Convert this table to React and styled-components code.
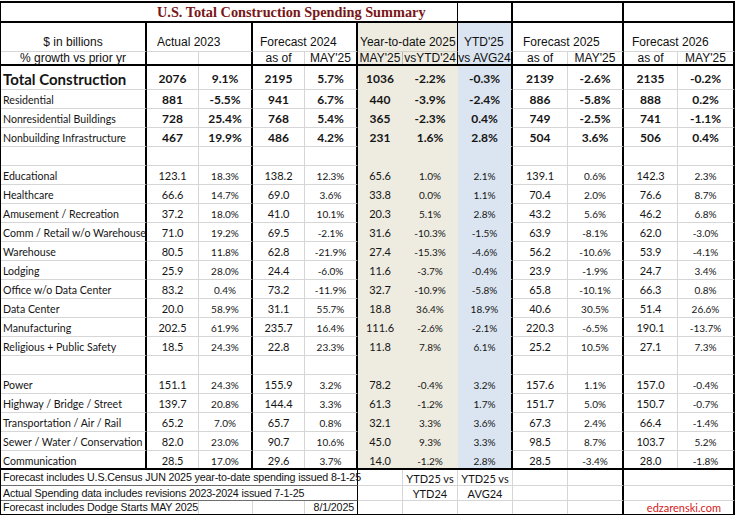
import React from 'react';
import styled, { createGlobalStyle, css } from 'styled-components';

const GlobalStyle = createGlobalStyle`
  html, body { margin: 0; padding: 0; background: #ffffff; }
  body { width: 736px; height: 516px; overflow: hidden; }
`;

const GRID = '#d6d6d6';
const INK = '#151515';
const FILLS = { tan: '#eeece1', blue: '#dbe5f1' };
const COLS = '146px 52px 54px 52px 53px 45px 55px 55px 55px 56px 54px 57px';
const BODY_FONT = 'Lato, "Open Sans", sans-serif';
const HEAD_FONT = '"Liberation Sans", Arial, sans-serif';

const Sheet = styled.div`
  margin-top: 1px;
  width: 735px;
  border-top: 2px solid #000;
  border-left: 1px solid #000;
  box-sizing: border-box;
  color: ${INK};
`;

const Row = styled.div`
  display: grid;
  grid-template-columns: ${COLS};
  height: ${(p) => p.$h}px;
  box-sizing: border-box;
  ${(p) =>
    p.$thick &&
    css`
      border-bottom: 2px solid #000;
      & > div { border-bottom: none; }
    `}
`;

const edgeRule = (p) => {
  if (p.$edge === 'thick') return '2px solid #000';
  if (p.$edge === 'dark') return '1px solid #000';
  if (p.$edge === 'gray') return '1px solid #b9b7ae';
  if (p.$edge === 'none') return '1px solid transparent';
  return `1px solid ${p.$fill ? FILLS[p.$fill] : GRID}`;
};

const Cell = styled.div`
  box-sizing: border-box;
  grid-column: span ${(p) => p.$span || 1};
  display: flex;
  align-items: ${(p) => (p.$bottom ? 'flex-end' : 'center')};
  justify-content: ${(p) =>
    p.$align === 'left' ? 'flex-start' : p.$align === 'right' ? 'flex-end' : 'center'};
  padding: ${(p) => `${p.$pt || 0}px ${p.$pr || 0}px ${p.$pb || 0}px ${p.$pl || 0}px`};
  background: ${(p) => (p.$fill ? FILLS[p.$fill] : '#ffffff')};
  border-right: ${edgeRule};
  border-bottom: 1px solid ${(p) => (p.$rule ? p.$rule : p.$fill ? FILLS[p.$fill] : GRID)};
  white-space: nowrap;
  overflow: visible;
  min-width: 0;
`;

const Text = styled.span`
  position: relative;
`;

const Title = styled(Text)`
  font-family: "Liberation Serif", "Times New Roman", serif;
  font-weight: 700;
  font-size: 14.3px;
  color: #7a1518;
  line-height: 18px;
`;

const Head = styled(Text)`
  font-family: ${HEAD_FONT};
  font-size: 12px;
  line-height: ${(p) => p.$lh || 14}px;
  color: #111;
`;

const Label = styled(Text)`
  font-family: ${BODY_FONT};
  font-size: ${(p) => (p.$big ? 15 : 10.6)}px;
  font-weight: ${(p) => (p.$big ? 700 : 400)};
  line-height: 14px;
  color: ${INK};
`;

const Num = styled(Text)`
  font-family: ${BODY_FONT};
  font-size: ${(p) => (p.$bold ? 12 : p.$pct ? 10 : 11)}px;
  font-weight: ${(p) => (p.$bold ? 700 : 400)};
  line-height: 14px;
  color: ${INK};
`;

const Note = styled(Text)`
  font-family: "Liberation Sans", Arial, sans-serif;
  font-size: 10.7px;
  letter-spacing: -0.15px;
  line-height: 13px;
  color: #111;
`;

const Small = styled(Text)`
  font-family: ${BODY_FONT};
  font-size: 11px;
  line-height: 13px;
  color: ${INK};
`;

const Credit = styled(Text)`
  font-family: ${BODY_FONT};
  font-size: 11px;
  line-height: 13px;
  color: #d42020;
`;

const EDGES = ['thick', 'grid', 'thick', 'grid', 'thick', 'grid', 'none', 'thick', 'grid', 'thick', 'grid', 'thick'];
const DATA_FILLS = [null, null, null, null, null, 'tan', 'tan', 'blue', null, null, null, null];

const total = ['Total Construction', '2076', '9.1%', '2195', '5.7%', '1036', '-2.2%', '-0.3%', '2139', '-2.6%', '2135', '-0.2%'];

const groups = [
  ['Residential', '881', '-5.5%', '941', '6.7%', '440', '-3.9%', '-2.4%', '886', '-5.8%', '888', '0.2%'],
  ['Nonresidential Buildings', '728', '25.4%', '768', '5.4%', '365', '-2.3%', '0.4%', '749', '-2.5%', '741', '-1.1%'],
  ['Nonbuilding Infrastructure', '467', '19.9%', '486', '4.2%', '231', '1.6%', '2.8%', '504', '3.6%', '506', '0.4%'],
];

const buildings = [
  ['Educational', '123.1', '18.3%', '138.2', '12.3%', '65.6', '1.0%', '2.1%', '139.1', '0.6%', '142.3', '2.3%'],
  ['Healthcare', '66.6', '14.7%', '69.0', '3.6%', '33.8', '0.0%', '1.1%', '70.4', '2.0%', '76.6', '8.7%'],
  ['Amusement / Recreation', '37.2', '18.0%', '41.0', '10.1%', '20.3', '5.1%', '2.8%', '43.2', '5.6%', '46.2', '6.8%'],
  ['Comm / Retail w/o Warehouse', '71.0', '19.2%', '69.5', '-2.1%', '31.6', '-10.3%', '-1.5%', '63.9', '-8.1%', '62.0', '-3.0%'],
  ['Warehouse', '80.5', '11.8%', '62.8', '-21.9%', '27.4', '-15.3%', '-4.6%', '56.2', '-10.6%', '53.9', '-4.1%'],
  ['Lodging', '25.9', '28.0%', '24.4', '-6.0%', '11.6', '-3.7%', '-0.4%', '23.9', '-1.9%', '24.7', '3.4%'],
  ['Office w/o Data Center', '83.2', '0.4%', '73.2', '-11.9%', '32.7', '-10.9%', '-5.8%', '65.8', '-10.1%', '66.3', '0.8%'],
  ['Data Center', '20.0', '58.9%', '31.1', '55.7%', '18.8', '36.4%', '18.9%', '40.6', '30.5%', '51.4', '26.6%'],
  ['Manufacturing', '202.5', '61.9%', '235.7', '16.4%', '111.6', '-2.6%', '-2.1%', '220.3', '-6.5%', '190.1', '-13.7%'],
  ['Religious + Public Safety', '18.5', '24.3%', '22.8', '23.3%', '11.8', '7.8%', '6.1%', '25.2', '10.5%', '27.1', '7.3%'],
];

const infrastructure = [
  ['Power', '151.1', '24.3%', '155.9', '3.2%', '78.2', '-0.4%', '3.2%', '157.6', '1.1%', '157.0', '-0.4%'],
  ['Highway / Bridge / Street', '139.7', '20.8%', '144.4', '3.3%', '61.3', '-1.2%', '1.7%', '151.7', '5.0%', '150.7', '-0.7%'],
  ['Transportation / Air / Rail', '65.2', '7.0%', '65.7', '0.8%', '32.1', '3.3%', '3.6%', '67.3', '2.4%', '66.4', '-1.4%'],
  ['Sewer / Water / Conservation', '82.0', '23.0%', '90.7', '10.6%', '45.0', '9.3%', '3.3%', '98.5', '8.7%', '103.7', '5.2%'],
  ['Communication', '28.5', '17.0%', '29.6', '3.7%', '14.0', '-1.2%', '2.8%', '28.5', '-3.4%', '28.0', '-1.8%'],
];

const isPct = (v) => v.endsWith('%');

function DataRow({ row, kind, thick }) {
  const [label, ...vals] = row;
  const big = kind === 'total';
  const bold = kind === 'total' || kind === 'group';
  return (
    <Row $h={big ? 24 : 19} $thick={thick}>
      <Cell $align="left" $pl={2} $pt={big ? 3 : 2} $edge="thick">
        <Label $big={big}>{label}</Label>
      </Cell>
      {vals.map((v, i) => (
        <Cell key={i} $pt={big ? 3 : 2} $edge={EDGES[i + 1]} $fill={DATA_FILLS[i + 1]}>
          <Num $bold={bold} $pct={!bold && isPct(v)}>{v}</Num>
        </Cell>
      ))}
    </Row>
  );
}

function BlankRow() {
  return (
    <Row $h={19}>
      {EDGES.map((e, i) => (
        <Cell key={i} $edge={e} $fill={DATA_FILLS[i]} />
      ))}
    </Row>
  );
}

const NOTE_RULE = '#6e6e6e';

export default function App() {
  return (
    <>
      <GlobalStyle />
      <Sheet>
        <Row $h={20} $thick>
          <Cell $span={7} $align="left" $pl={156} $edge="dark">
            <Title>U.S. Total Construction Spending Summary</Title>
          </Cell>
          <Cell $edge="thick" />
          <Cell $span={2} $edge="thick" />
          <Cell $span={2} $edge="thick" />
        </Row>

        <Row $h={29}>
          <Cell $bottom $pb={2} $edge="thick">
            <Head>$ in billions</Head>
          </Cell>
          <Cell $span={2} $bottom $pb={2} $align="left" $pl={10} $edge="thick">
            <Head>Actual 2023</Head>
          </Cell>
          <Cell $span={2} $bottom $pb={2} $align="left" $pl={7} $edge="thick">
            <Head>Forecast 2024</Head>
          </Cell>
          <Cell $span={2} $bottom $pb={2} $align="left" $pl={2} $edge="dark" $fill="tan" $rule="#d3d1c6">
            <Head>Year-to-date 2025</Head>
          </Cell>
          <Cell $bottom $pb={2} $align="left" $pl={6} $edge="thick" $fill="blue">
            <Head>YTD'25</Head>
          </Cell>
          <Cell $span={2} $bottom $pb={2} $align="left" $pl={10} $edge="thick">
            <Head>Forecast 2025</Head>
          </Cell>
          <Cell $span={2} $bottom $pb={2} $align="left" $pl={8} $edge="thick">
            <Head>Forecast 2026</Head>
          </Cell>
        </Row>

        <Row $h={14} $thick>
          <Cell $edge="thick"><Head $lh={12}>% growth vs prior yr</Head></Cell>
          <Cell $edge="grid" />
          <Cell $edge="thick" />
          <Cell $edge="grid"><Head $lh={12}>as of</Head></Cell>
          <Cell $edge="thick"><Head $lh={12}>MAY'25</Head></Cell>
          <Cell $edge="gray" $fill="tan"><Head $lh={12}>MAY'25</Head></Cell>
          <Cell $edge="dark" $fill="tan"><Head $lh={12}>vsYTD'24</Head></Cell>
          <Cell $edge="thick" $fill="blue"><Head $lh={12}>vs AVG24</Head></Cell>
          <Cell $edge="grid"><Head $lh={12}>as of</Head></Cell>
          <Cell $edge="thick"><Head $lh={12}>MAY'25</Head></Cell>
          <Cell $edge="grid"><Head $lh={12}>as of</Head></Cell>
          <Cell $edge="thick"><Head $lh={12}>MAY'25</Head></Cell>
        </Row>

        <DataRow row={total} kind="total" />
        {groups.map((r) => (
          <DataRow key={r[0]} row={r} kind="group" />
        ))}
        <BlankRow />
        {buildings.map((r) => (
          <DataRow key={r[0]} row={r} kind="item" />
        ))}
        <BlankRow />
        {infrastructure.map((r, i) => (
          <DataRow key={r[0]} row={r} kind="item" thick={i === infrastructure.length - 1} />
        ))}

        <Row $h={16}>
          <Cell $span={5} $align="left" $pl={2} $edge="dark" $rule={NOTE_RULE}>
            <Note>Forecast includes U.S.Census JUN 2025 year-to-date spending issued 8-1-25</Note>
          </Cell>
          <Cell $edge="grid" />
          <Cell $edge="grid" $pt={2}><Small>YTD25 vs</Small></Cell>
          <Cell $edge="grid" $pt={2}><Small>YTD25 vs</Small></Cell>
          <Cell $edge="grid" />
          <Cell $edge="thick" />
          <Cell $span={2} $edge="thick" />
        </Row>
        <Row $h={15}>
          <Cell $span={5} $align="left" $pl={2} $edge="dark" $rule={NOTE_RULE}>
            <Note>Actual Spending data includes revisions 2023-2024 issued 7-1-25</Note>
          </Cell>
          <Cell $edge="grid" />
          <Cell $edge="grid"><Small>YTD24</Small></Cell>
          <Cell $edge="grid"><Small>AVG24</Small></Cell>
          <Cell $edge="grid" />
          <Cell $edge="thick" />
          <Cell $span={2} $edge="thick" />
        </Row>
        <Row $h={14} $thick>
          <Cell $span={2} $align="left" $pl={2} $edge="grid">
            <Note>Forecast includes Dodge Starts MAY 2025</Note>
          </Cell>
          <Cell $edge="grid" />
          <Cell $edge="grid" />
          <Cell $align="right" $pr={3} $edge="dark">
            <Note>8/1/2025</Note>
          </Cell>
          <Cell $edge="grid" />
          <Cell $edge="grid" />
          <Cell $edge="grid" />
          <Cell $edge="grid" />
          <Cell $edge="thick" />
          <Cell $span={2} $align="right" $pr={12} $edge="thick">
            <Credit>edzarenski.com</Credit>
          </Cell>
        </Row>
      </Sheet>
    </>
  );
}
